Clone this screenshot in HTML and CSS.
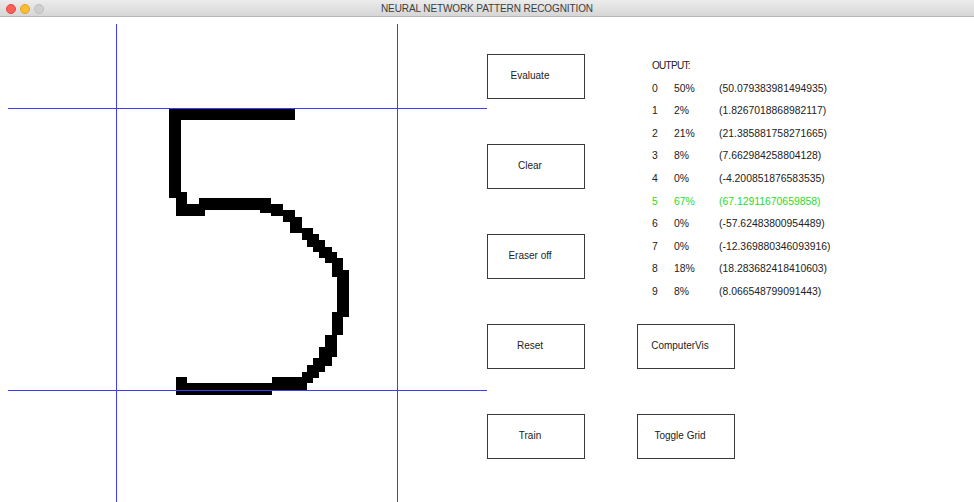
FILE: index.html
```html
<!DOCTYPE html>
<html lang="en">
<head>
<meta charset="utf-8">
<title>Neural Network Pattern Recognition</title>
<link rel="stylesheet" href="styles.css">
</head>
<body>
<div class="window">
  <header class="titlebar">
    <div class="lights">
      <span class="light red"></span>
      <span class="light yellow"></span>
      <span class="light grey"></span>
    </div>
    <div class="title">NEURAL NETWORK PATTERN RECOGNITION</div>
    <div></div>
  </header>
  <main class="content">
    <svg class="canvas" width="487" height="485" viewBox="0 17 487 485" shape-rendering="crispEdges" aria-label="Drawing canvas">
      <g fill="#000">
        <rect x="169" y="109" width="126" height="11"/>
        <rect x="169" y="109" width="12" height="89"/>
        <rect x="169" y="192" width="18" height="6"/>
        <rect x="176" y="198" width="11" height="18"/>
        <rect x="187" y="204" width="18" height="12"/>
        <rect x="199" y="198" width="72" height="12"/>
        <rect x="260" y="198" width="11" height="15"/>
        <rect x="271" y="204" width="12" height="12"/>
        <rect x="283" y="210" width="12" height="12"/>
        <rect x="290" y="217" width="12" height="16"/>
        <rect x="302" y="228" width="11" height="12"/>
        <rect x="307" y="234" width="12" height="13"/>
        <rect x="313" y="240" width="12" height="12"/>
        <rect x="319" y="247" width="13" height="11"/>
        <rect x="325" y="252" width="12" height="11"/>
        <rect x="332" y="258" width="11" height="19"/>
        <rect x="337" y="270" width="12" height="47"/>
        <rect x="332" y="312" width="11" height="23"/>
        <rect x="325" y="335" width="12" height="22"/>
        <rect x="319" y="347" width="13" height="19"/>
        <rect x="313" y="358" width="12" height="14"/>
        <rect x="307" y="365" width="12" height="13"/>
        <rect x="302" y="372" width="11" height="11"/>
        <rect x="272" y="377" width="35" height="13"/>
        <rect x="176" y="383" width="96" height="12"/>
        <rect x="176" y="377" width="11" height="18"/>
      </g>
      <g stroke="#3c3cff" stroke-width="1">
        <line x1="116.5" y1="24" x2="116.5" y2="502"/>
        <line x1="397.5" y1="24" x2="397.5" y2="502"/>
        <line x1="8" y1="108.5" x2="488" y2="108.5"/>
        <line x1="8" y1="390.5" x2="488" y2="390.5"/>
      </g>
    </svg>
    <section class="controls">
      <button class="btn r1 c1">Evaluate</button>
      <button class="btn r2 c1">Clear</button>
      <button class="btn r3 c1">Eraser off</button>
      <button class="btn r4 c1">Reset</button>
      <button class="btn r5 c1">Train</button>
      <div class="output">
        <div class="output-title">OUTPUT:</div>
        <div class="row"><span>0</span><span>50%</span><span>(50.079383981494935)</span></div>
        <div class="row"><span>1</span><span>2%</span><span>(1.8267018868982117)</span></div>
        <div class="row"><span>2</span><span>21%</span><span>(21.385881758271665)</span></div>
        <div class="row"><span>3</span><span>8%</span><span>(7.662984258804128)</span></div>
        <div class="row"><span>4</span><span>0%</span><span>(-4.200851876583535)</span></div>
        <div class="row best"><span>5</span><span>67%</span><span>(67.12911670659858)</span></div>
        <div class="row"><span>6</span><span>0%</span><span>(-57.62483800954489)</span></div>
        <div class="row"><span>7</span><span>0%</span><span>(-12.369880346093916)</span></div>
        <div class="row"><span>8</span><span>18%</span><span>(18.283682418410603)</span></div>
        <div class="row"><span>9</span><span>8%</span><span>(8.066548799091443)</span></div>
      </div>
      <button class="btn r4 c2">ComputerVis</button>
      <button class="btn r5 c2">Toggle Grid</button>
    </section>
  </main>
</div>
</body>
</html>
```

FILE: styles.css
```css
* { box-sizing: border-box; }

html, body {
  margin: 0;
  padding: 0;
  background: #ffffff;
}

.window {
  width: 974px;
  height: 502px;
  overflow: hidden;
  background: #ffffff;
  font-family: "Liberation Sans", Arial, sans-serif;
  color: #222222;
}

.titlebar {
  height: 17px;
  display: grid;
  grid-template-columns: 1fr auto 1fr;
  align-items: center;
  background: linear-gradient(#ececec, #d6d6d6);
  border-bottom: 1px solid #b8b8b8;
}

.lights {
  display: flex;
  gap: 4px;
  padding-left: 6px;
  align-items: center;
}

.light {
  width: 10px;
  height: 10px;
  border-radius: 50%;
  display: block;
}
.light.red { background: #fc5f57; border: 0.5px solid #e2463f; }
.light.yellow { background: #fdbc2e; border: 0.5px solid #e0a027; }
.light.grey { background: #cfcfcf; border: 0.5px solid #bdbdbd; }

.title {
  font-size: 10px;
  color: #3c3c3c;
  letter-spacing: -0.1px;
  line-height: 17px;
}

.content {
  display: flex;
  align-items: flex-start;
}

.canvas {
  display: block;
  flex: none;
}

.controls {
  padding-top: 37px;
  display: grid;
  grid-template-columns: 98px auto;
  grid-template-rows: repeat(5, 45px);
  column-gap: 52px;
  row-gap: 45px;
}

.btn {
  width: 98px;
  height: 45px;
  margin: 0;
  padding: 0 12px 3px 0;
  background: #ffffff;
  border: 1px solid #3a3a3a;
  border-radius: 0;
  font-family: "Liberation Sans", Arial, sans-serif;
  font-size: 10px;
  color: #222222;
  text-align: center;
}

.c1 { grid-column: 1; }
.c2 { grid-column: 2; justify-self: start; }
.r1 { grid-row: 1; }
.r2 { grid-row: 2; }
.r3 { grid-row: 3; }
.r4 { grid-row: 4; }
.r5 { grid-row: 5; }

.output {
  grid-column: 2;
  grid-row: 1 / span 3;
  align-self: start;
  padding-top: 1px;
  padding-left: 15px;
  font-size: 10.4px;
  line-height: 22.6px;
  white-space: nowrap;
}

.output-title {
  letter-spacing: -0.7px;
  font-size: 10px;
}

.row {
  display: grid;
  grid-template-columns: 22px 45px auto;
}

.row.best {
  color: #1fdc1f;
}
```
